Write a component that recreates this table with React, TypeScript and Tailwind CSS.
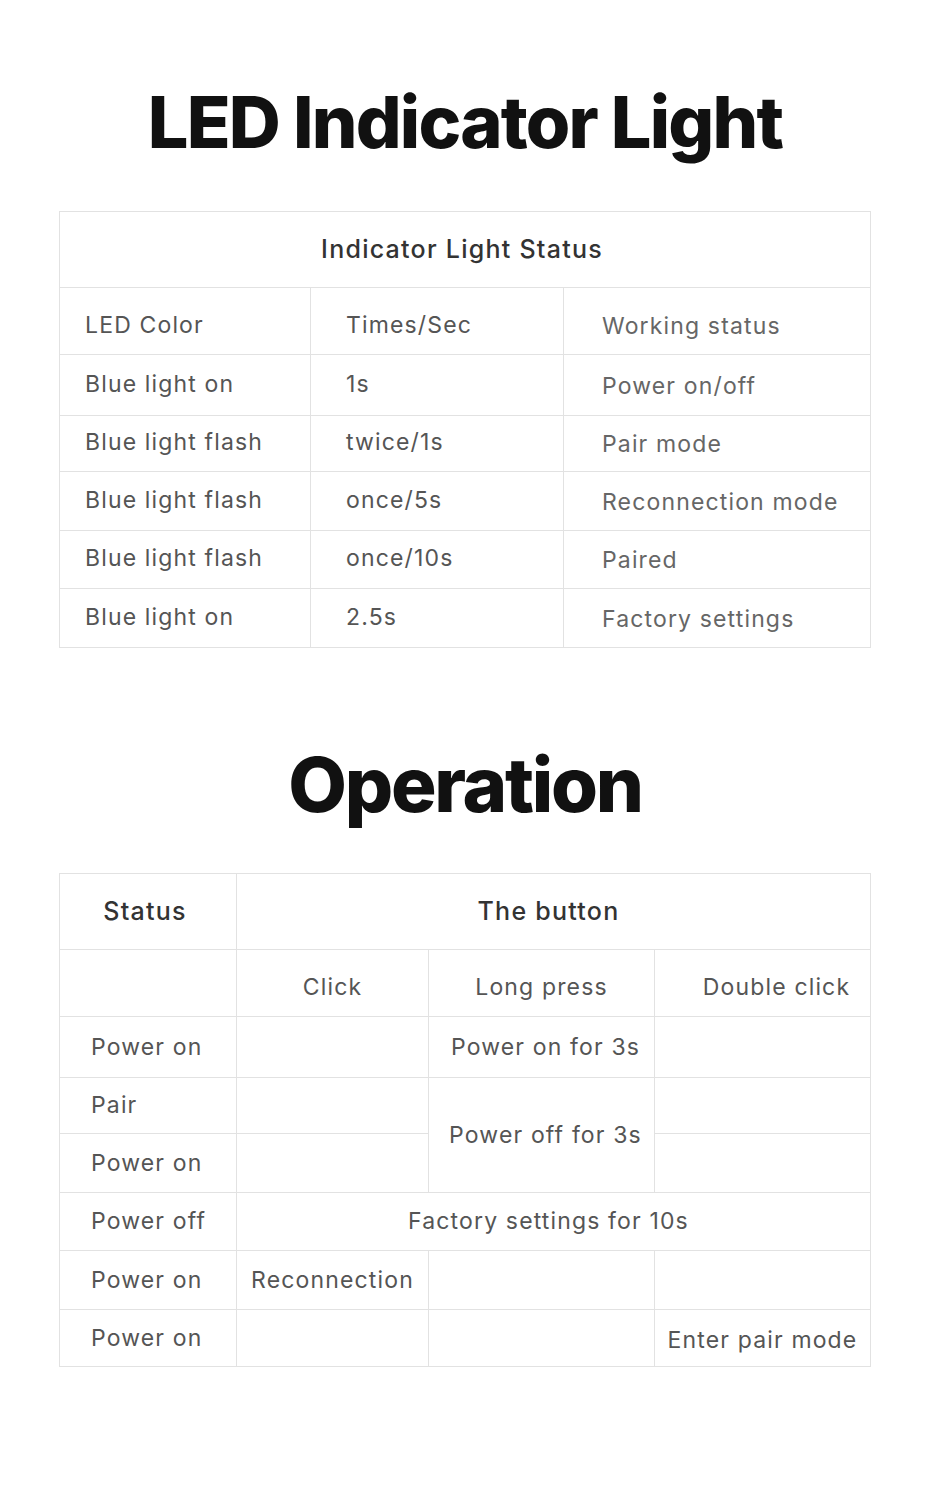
import React from 'react'

const font = { fontFamily: 'Inter, "Noto Sans", sans-serif' }

const ledRows = [
  { color: 'Blue light on', times: '1s', status: 'Power on/off', h: 'h-[61px]' },
  { color: 'Blue light flash', times: 'twice/1s', status: 'Pair mode', h: 'h-[56px]' },
  { color: 'Blue light flash', times: 'once/5s', status: 'Reconnection mode', h: 'h-[59px]' },
  { color: 'Blue light flash', times: 'once/10s', status: 'Paired', h: 'h-[58px]' },
  { color: 'Blue light on', times: '2.5s', status: 'Factory settings', h: 'h-[59px]' },
]

const cell = 'border border-[#e2e2e2] text-[23px] tracking-[0.05em] text-[#555] font-normal'
const head = 'border border-[#e2e2e2] text-[25px] tracking-[0.05em] text-[#333] font-medium'

export default function App() {
  return (
    <div className="w-[930px] min-h-[1500px] bg-white" style={font}>
      {/* LED section */}
      <h1 className="pt-[78px] text-center text-[72px] leading-[88px] font-extrabold tracking-[-0.025em] text-[#111]">
        LED Indicator Light
      </h1>

      <table className="ml-[59px] mt-[45px] w-[812px] border-collapse table-fixed">
        <colgroup>
          <col className="w-[251px]" />
          <col className="w-[253px]" />
          <col />
        </colgroup>
        <tbody>
          <tr className="h-[76px]">
            <td colSpan={3} className={`${head} text-center pr-[6px]`}>
              Indicator Light Status
            </td>
          </tr>
          <tr className="h-[67px]">
            <td className={`${cell} pl-[25px] pt-[8px]`}>LED Color</td>
            <td className={`${cell} pl-[35px] pt-[8px]`}>Times/Sec</td>
            <td className={`${cell} pl-[38px] pt-[10px] text-[#666]`}>Working status</td>
          </tr>
          {ledRows.map((r, i) => (
            <tr key={i} className={r.h}>
              <td className={`${cell} pl-[25px] pb-[2px]`}>{r.color}</td>
              <td className={`${cell} pl-[35px] pb-[2px]`}>{r.times}</td>
              <td className={`${cell} pl-[38px] pt-[2px] text-[#666]`}>{r.status}</td>
            </tr>
          ))}
        </tbody>
      </table>

      {/* Operation section */}
      <h2 className="mt-[92px] text-center text-[76px] leading-[88px] font-extrabold tracking-[-0.03em] text-[#111]">
        Operation
      </h2>

      <table className="ml-[59px] mt-[45px] w-[812px] border-collapse table-fixed text-center">
        <colgroup>
          <col className="w-[177px]" />
          <col className="w-[192px]" />
          <col className="w-[226px]" />
          <col />
        </colgroup>
        <tbody>
          <tr className="h-[76px]">
            <td className={`${head} pr-[6px]`}>Status</td>
            <td colSpan={3} className={`${head} pr-[10px]`}>The button</td>
          </tr>
          <tr className="h-[67px]">
            <td className={cell}></td>
            <td className={`${cell} pt-[8px]`}>Click</td>
            <td className={`${cell} pt-[8px]`}>Long press</td>
            <td className={`${cell} pt-[8px] pl-[28px]`}>Double click</td>
          </tr>
          <tr className="h-[61px]">
            <td className={`${cell} text-left pl-[31px]`}>Power on</td>
            <td className={cell}></td>
            <td className={`${cell} pl-[8px]`}>Power on for 3s</td>
            <td className={cell}></td>
          </tr>
          <tr className="h-[56px]">
            <td className={`${cell} text-left pl-[31px]`}>Pair</td>
            <td className={cell}></td>
            <td rowSpan={2} className={`${cell} pl-[8px]`}>Power off for 3s</td>
            <td className={cell}></td>
          </tr>
          <tr className="h-[59px]">
            <td className={`${cell} text-left pl-[31px]`}>Power on</td>
            <td className={cell}></td>
            <td className={cell}></td>
          </tr>
          <tr className="h-[58px]">
            <td className={`${cell} text-left pl-[31px]`}>Power off</td>
            <td colSpan={3} className={`${cell} pr-[10px]`}>Factory settings for 10s</td>
          </tr>
          <tr className="h-[59px]">
            <td className={`${cell} text-left pl-[31px]`}>Power on</td>
            <td className={cell}>Reconnection</td>
            <td className={cell}></td>
            <td className={cell}></td>
          </tr>
          <tr className="h-[57px]">
            <td className={`${cell} text-left pl-[31px]`}>Power on</td>
            <td className={cell}></td>
            <td className={cell}></td>
            <td className={`${cell} pt-[4px]`}>Enter pair mode</td>
          </tr>
        </tbody>
      </table>
    </div>
  )
}
